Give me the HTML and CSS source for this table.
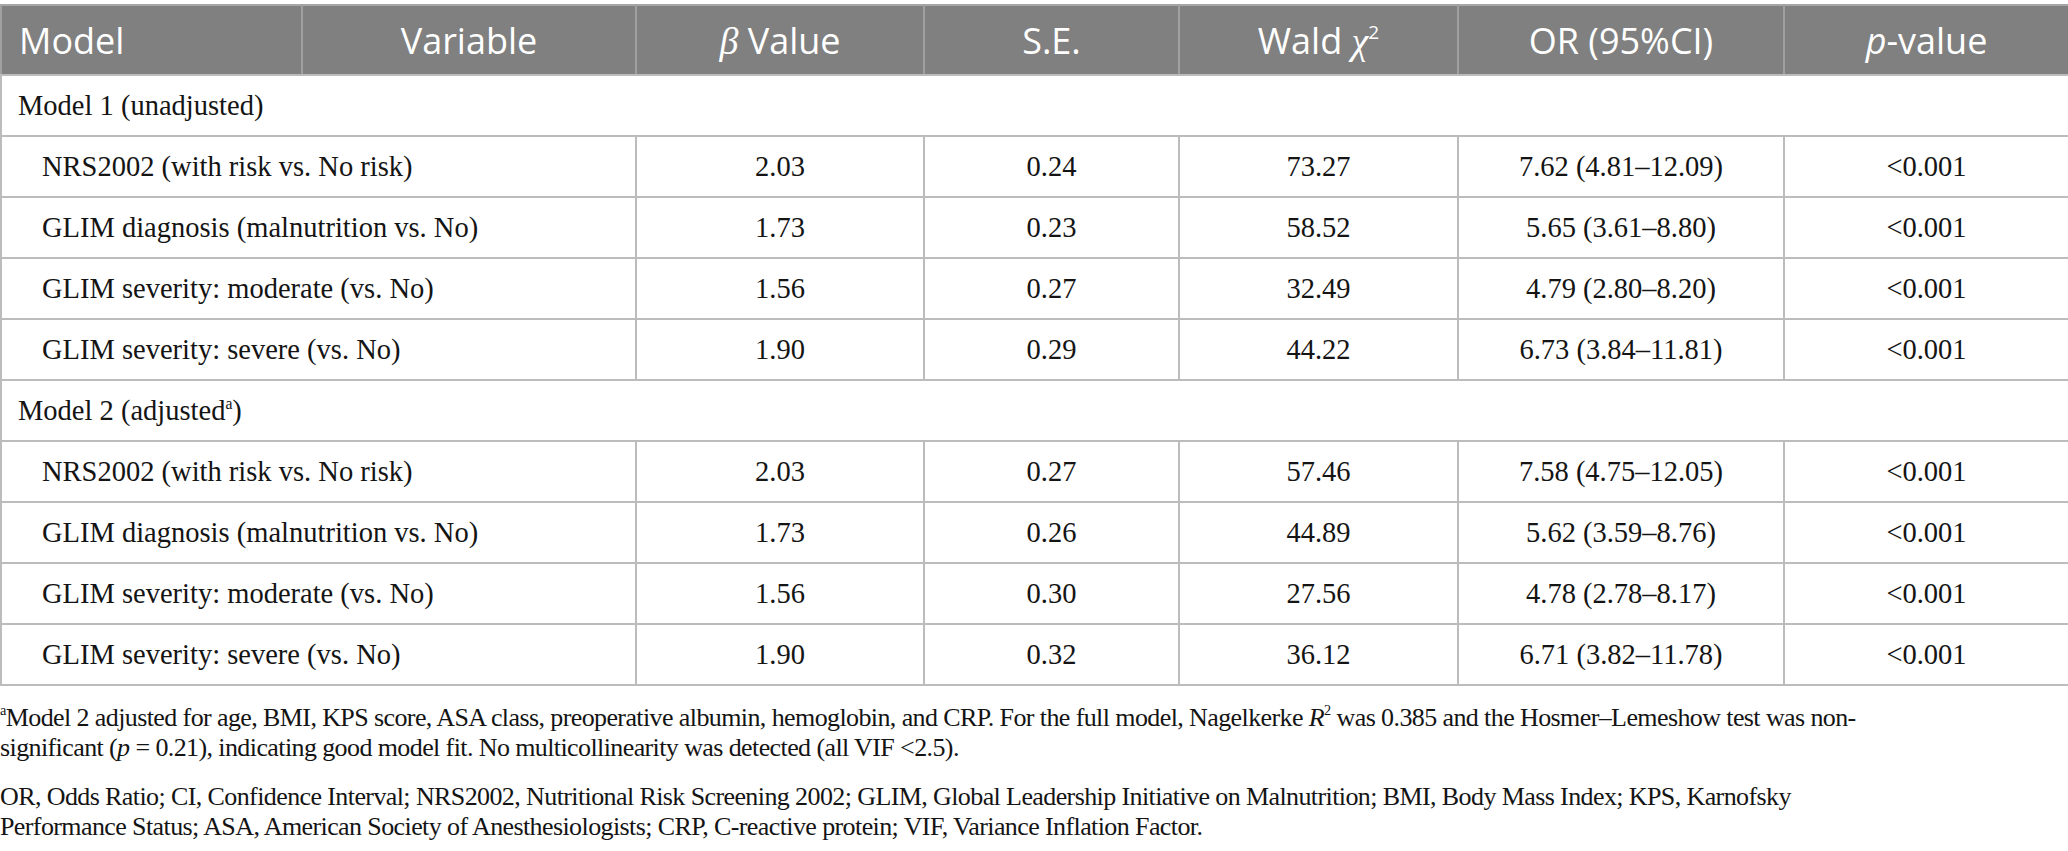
FILE: index.html
```html
<!DOCTYPE html>
<html>
<head>
<meta charset="utf-8">
<link rel="stylesheet" href="styles.css">
</head>
<body>
<div class="page">
<table class="tbl">
  <colgroup>
    <col class="c1"><col class="c2"><col class="c3"><col class="c4"><col class="c5"><col class="c6"><col class="c7">
  </colgroup>
  <thead>
    <tr class="head">
      <th class="left">Model</th>
      <th>Variable</th>
      <th><span class="greek">β</span> Value</th>
      <th>S.E.</th>
      <th>Wald <span class="greek">χ</span><sup class="hsup">2</sup></th>
      <th>OR (95%CI)</th>
      <th><span class="ital">p</span>-value</th>
    </tr>
  </thead>
  <tbody>
    <tr class="group"><td colspan="7">Model 1 (unadjusted)</td></tr>
    <tr><td colspan="2" class="var">NRS2002 (with risk vs. No risk)</td><td>2.03</td><td>0.24</td><td>73.27</td><td>7.62 (4.81–12.09)</td><td>&lt;0.001</td></tr>
    <tr><td colspan="2" class="var">GLIM diagnosis (malnutrition vs. No)</td><td>1.73</td><td>0.23</td><td>58.52</td><td>5.65 (3.61–8.80)</td><td>&lt;0.001</td></tr>
    <tr><td colspan="2" class="var">GLIM severity: moderate (vs. No)</td><td>1.56</td><td>0.27</td><td>32.49</td><td>4.79 (2.80–8.20)</td><td>&lt;0.001</td></tr>
    <tr><td colspan="2" class="var">GLIM severity: severe (vs. No)</td><td>1.90</td><td>0.29</td><td>44.22</td><td>6.73 (3.84–11.81)</td><td>&lt;0.001</td></tr>
    <tr class="group"><td colspan="7">Model 2 (adjusted<sup class="fn">a</sup>)</td></tr>
    <tr><td colspan="2" class="var">NRS2002 (with risk vs. No risk)</td><td>2.03</td><td>0.27</td><td>57.46</td><td>7.58 (4.75–12.05)</td><td>&lt;0.001</td></tr>
    <tr><td colspan="2" class="var">GLIM diagnosis (malnutrition vs. No)</td><td>1.73</td><td>0.26</td><td>44.89</td><td>5.62 (3.59–8.76)</td><td>&lt;0.001</td></tr>
    <tr><td colspan="2" class="var">GLIM severity: moderate (vs. No)</td><td>1.56</td><td>0.30</td><td>27.56</td><td>4.78 (2.78–8.17)</td><td>&lt;0.001</td></tr>
    <tr><td colspan="2" class="var">GLIM severity: severe (vs. No)</td><td>1.90</td><td>0.32</td><td>36.12</td><td>6.71 (3.82–11.78)</td><td>&lt;0.001</td></tr>
  </tbody>
</table>
<div class="notes">
  <p class="note"><sup class="nsup">a</sup>Model 2 adjusted for age, BMI, KPS score, ASA class, preoperative albumin, hemoglobin, and CRP. For the full model, Nagelkerke <span class="ital">R</span><sup class="nsup">2</sup> was 0.385 and the Hosmer–Lemeshow test was non-<br>significant (<span class="ital">p</span> = 0.21), indicating good model fit. No multicollinearity was detected (all VIF &lt;2.5).</p>
  <p class="note">OR, Odds Ratio; CI, Confidence Interval; NRS2002, Nutritional Risk Screening 2002; GLIM, Global Leadership Initiative on Malnutrition; BMI, Body Mass Index; KPS, Karnofsky<br>Performance Status; ASA, American Society of Anesthesiologists; CRP, C-reactive protein; VIF, Variance Inflation Factor.</p>
</div>
</div>
</body>
</html>
```
FILE: styles.css
```css
html, body {
  margin: 0;
  padding: 0;
  background: #ffffff;
}
.page {
  padding-top: 4px;
  width: 2068px;
}
.tbl {
  width: 2068px;
  border-collapse: collapse;
  table-layout: fixed;
  font-family: "Liberation Serif", "Times New Roman", serif;
  font-size: 28.5px;
  color: #141414;
}
.c1 { width: 301px; }
.c2 { width: 334px; }
.c3 { width: 288px; }
.c4 { width: 255px; }
.c5 { width: 279px; }
.c6 { width: 326px; }
.c7 { width: 285px; }
.tbl th, .tbl td {
  border: 2px solid #bcbcbc;
  padding: 0;
  text-align: center;
  vertical-align: middle;
  white-space: nowrap;
}
.head th {
  background: #808080;
  color: #ffffff;
  font-family: "Open Sans", "Liberation Sans", sans-serif;
  font-weight: 400;
  font-size: 36px;
  height: 68px;
  border-color: #a6a6a6 #a0a0a0 #bcbcbc #a0a0a0;
}
.head th.left {
  text-align: left;
  padding-left: 17px;
}
.greek {
  font-family: "Liberation Serif", serif;
  font-style: italic;
  font-size: 38px;
}
.ital { font-style: italic; }
.hsup {
  font-size: 19px;
  vertical-align: 15px;
  line-height: 0;
}
.tbl td { height: 59px; }
.group td {
  text-align: left;
  padding-left: 16px;
}
.tbl td.var {
  text-align: left;
  padding-left: 40px;
}
.fn {
  font-size: 0.55em;
  vertical-align: 0.7em;
  line-height: 0;
}
.nsup {
  font-size: 0.55em;
  vertical-align: baseline;
  position: relative;
  top: -0.75em;
  line-height: 0;
}
.notes {
  font-family: "Liberation Serif", "Times New Roman", serif;
  font-size: 26px;
  letter-spacing: -0.6px;
  color: #141414;
  padding-top: 17px;
}
.note {
  margin: 0 0 19px 0;
  line-height: 30px;
}
```
